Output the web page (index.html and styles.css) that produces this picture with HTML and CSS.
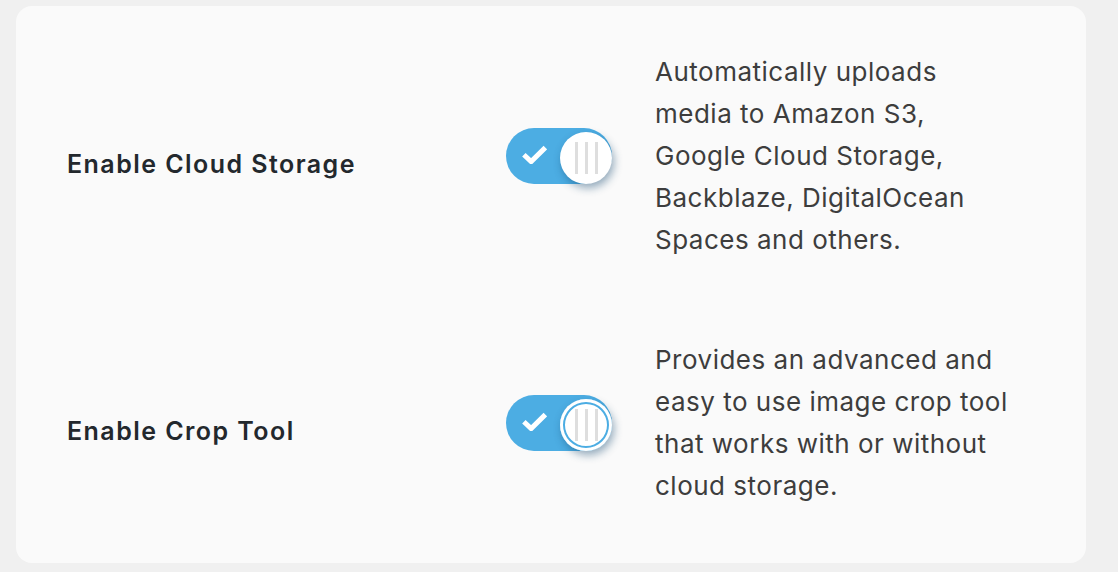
FILE: index.html
```html
<!DOCTYPE html>
<html lang="en">
<head>
<meta charset="utf-8">
<title>Settings</title>
<link rel="stylesheet" href="styles.css">
</head>
<body>
<div class="page">
  <div class="card">
    <div class="row">
      <div class="label">Enable Cloud Storage</div>
      <div class="toggle-cell">
        <div class="toggle">
          <svg class="check" viewBox="0 0 24 18" width="25" height="19"><path d="M1.8 9.2 L8.8 15.8 L22.4 2.4" fill="none" stroke="#fff" stroke-width="4.8" stroke-linejoin="miter" stroke-linecap="butt"/></svg>
          <div class="knob"><span></span><span></span><span></span></div>
        </div>
      </div>
      <p class="desc">Automatically uploads media to Amazon S3, Google Cloud Storage, Backblaze, DigitalOcean Spaces and others.</p>
    </div>
    <div class="row">
      <div class="label">Enable Crop Tool</div>
      <div class="toggle-cell">
        <div class="toggle">
          <svg class="check" viewBox="0 0 24 18" width="25" height="19"><path d="M1.8 9.2 L8.8 15.8 L22.4 2.4" fill="none" stroke="#fff" stroke-width="4.8" stroke-linejoin="miter" stroke-linecap="butt"/></svg>
          <div class="knob focused"><span></span><span></span><span></span></div>
        </div>
      </div>
      <p class="desc">Provides an advanced and easy to use image crop tool that works with or without cloud storage.</p>
    </div>
  </div>
</div>
</body>
</html>
```

FILE: styles.css
```css
html, body {
  margin: 0;
  padding: 0;
  background: #f0f0f0;
}
body {
  font-family: Inter, "Noto Sans", "Liberation Sans", sans-serif;
}
.page {
  padding: 6px 32px 9px 16px;
}
.card {
  background: #fafafa;
  border-radius: 16px;
  padding: 45px 0 56px 51px;
  display: flex;
  flex-direction: column;
  gap: 78px;
}
.row {
  display: flex;
  align-items: center;
}
.label {
  width: 439px;
  margin-top: 16px;
  font-size: 25px;
  letter-spacing: 1.45px;
  font-weight: 600;
  color: #23282d;
}
.toggle-cell {
  width: 149px;
  display: flex;
}
.toggle {
  width: 106px;
  height: 56px;
  border-radius: 28px;
  background: #4cade3;
  display: flex;
  align-items: center;
  justify-content: space-between;
  padding: 0 0 0 16px;
  box-sizing: border-box;
}
.check {
  display: block;
  margin-top: -4px;
}
.knob {
  width: 52px;
  height: 52px;
  flex: none;
  border-radius: 50%;
  background: #fff;
  box-shadow: 2px 4px 8px rgba(20, 70, 110, 0.45);
  display: flex;
  justify-content: center;
  align-items: center;
  gap: 7px;
  margin-top: 4px;
  margin-right: 0;
}
.knob.focused {
  box-shadow: inset 0 0 0 3px #fff, inset 0 0 0 5px #4cade3, 2px 4px 8px rgba(20, 70, 110, 0.45);
}
.knob span {
  width: 3px;
  height: 32px;
  background: #dedede;
}
.desc {
  margin: 0;
  width: 356px;
  font-size: 26px;
  letter-spacing: 0.5px;
  line-height: 42px;
  color: #3d3d3d;
}
```
